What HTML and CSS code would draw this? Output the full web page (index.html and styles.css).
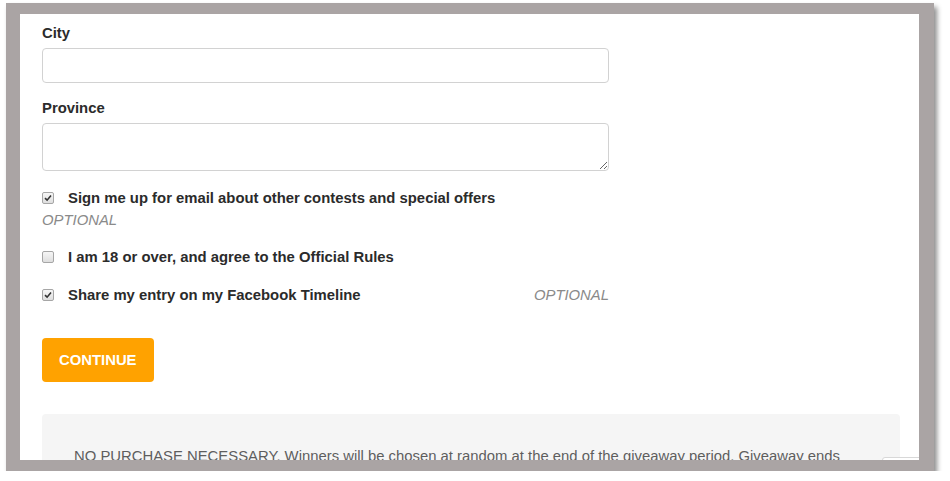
FILE: index.html
```html
<!DOCTYPE html>
<html lang="en">
<head>
  <meta charset="UTF-8">
  <title>Contest Entry</title>
  <link rel="stylesheet" href="styles.css">
</head>
<body>
  <div class="frame">
    <div class="sheet">
      <form class="entry-form">
        <!-- Address fields -->
        <div class="field">
          <label class="field-label" for="city">City</label>
          <input type="text" id="city" class="text-input">
        </div>
        <div class="field field-last">
          <label class="field-label" for="province">Province</label>
          <textarea id="province" class="text-area"></textarea>
        </div>

        <!-- Opt-ins -->
        <div class="option option-stacked">
          <label class="option-row">
            <input type="checkbox" class="check" checked>
            <span>Sign me up for email about other contests and special offers</span>
          </label>
          <div class="optional">OPTIONAL</div>
        </div>
        <div class="option">
          <label class="option-row">
            <input type="checkbox" class="check">
            <span>I am 18 or over, and agree to the Official Rules</span>
          </label>
        </div>
        <div class="option option-split">
          <label class="option-row">
            <input type="checkbox" class="check" checked>
            <span>Share my entry on my Facebook Timeline</span>
          </label>
          <div class="optional">OPTIONAL</div>
        </div>

        <button type="button" class="continue-btn">CONTINUE</button>
      </form>

      <div class="rules">
        NO PURCHASE NECESSARY. Winners will be chosen at random at the end of the giveaway period. Giveaway ends
      </div>

      <div class="to-top"></div>
    </div>
  </div>
</body>
</html>
```

FILE: styles.css
```css
/* Global */
body {
  margin: 0;
  background: #fff;
  font-family: "Liberation Sans", Arial, Helvetica, sans-serif;
  font-size: 14.85px;
  color: #333;
}

/* Grey screenshot frame */
.frame {
  margin: 3px 0 0 6px;
  width: 928px;
  height: 468px;
  box-sizing: border-box;
  padding: 11px 15px 11px 14px;
  background: #aaa4a4;
  box-shadow: 3px 4px 5px rgba(0, 0, 0, 0.45);
}

.sheet {
  position: relative;
  height: 100%;
  background: #fff;
  overflow: hidden;
  padding: 11px 19px 0 22px;
  box-sizing: border-box;
}

/* Form */
.entry-form {
  width: 567px;
  display: flex;
  flex-direction: column;
}

.field {
  display: flex;
  flex-direction: column;
  margin-bottom: 17px;
}

.field-last {
  margin-bottom: 16px;
}

.field-label {
  font-weight: bold;
  line-height: 17px;
  margin-bottom: 6px;
  color: #2b2b2b;
}

.text-input,
.text-area {
  box-sizing: border-box;
  width: 100%;
  border: 1px solid #d2d2d2;
  border-radius: 4px;
  font-family: inherit;
  font-size: 15px;
  padding: 6px 10px;
  background: #fff;
}

.text-input {
  height: 35px;
}

.text-area {
  height: 48px;
  resize: vertical;
  display: block;
}

/* Checkbox rows */
.option {
  margin-bottom: 16px;
  line-height: 22px;
}

.option-stacked {
  margin-bottom: 15px;
}

.option-split {
  display: flex;
  justify-content: space-between;
}

.option-row {
  display: flex;
  align-items: center;
  gap: 14px;
  font-weight: bold;
  color: #2b2b2b;
}

.check {
  appearance: none;
  margin: 0;
  width: 12px;
  height: 12px;
  border: 1px solid #a6a6a6;
  border-radius: 2px;
  background: linear-gradient(#f6f6f6, #dedede);
  box-sizing: border-box;
}

.check:checked {
  background-image: url("data:image/svg+xml,%3Csvg xmlns='http://www.w3.org/2000/svg' viewBox='0 0 10 10'%3E%3Cpath d='M2 5.2 L4.1 7.2 L8 2.6' fill='none' stroke='%23333' stroke-width='1.6'/%3E%3C/svg%3E"), linear-gradient(#f6f6f6, #dedede);
  background-size: 10px 10px, auto;
  background-position: center;
  background-repeat: no-repeat;
}

.optional {
  font-style: italic;
  color: #8a8a8a;
}

/* Continue button */
.continue-btn {
  align-self: flex-start;
  margin-top: 16px;
  height: 44px;
  padding: 0 17px;
  border: none;
  border-radius: 4px;
  background: #ffa200;
  color: #fff;
  font-family: inherit;
  font-size: 14.85px;
  font-weight: bold;
  cursor: pointer;
}

/* Rules box */
.rules {
  margin-top: 32px;
  padding: 31px 32px;
  background: #f5f5f5;
  border-radius: 4px;
  line-height: 22px;
  color: #5e5e5e;
}

.to-top {
  position: absolute;
  left: 862px;
  top: 443px;
  width: 40px;
  height: 40px;
  border: 1px solid #d8d8d8;
  border-radius: 3px;
  background: #fff;
}
```
